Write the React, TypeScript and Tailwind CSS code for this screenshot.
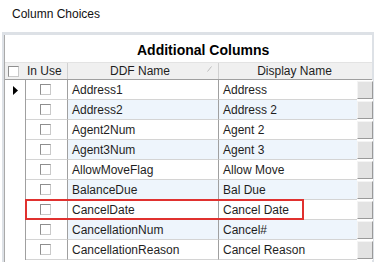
import React from 'react'

interface Row {
  ddf: string
  display: string
}

const rows: Row[] = [
  { ddf: 'Address1', display: 'Address' },
  { ddf: 'Address2', display: 'Address 2' },
  { ddf: 'Agent2Num', display: 'Agent 2' },
  { ddf: 'Agent3Num', display: 'Agent 3' },
  { ddf: 'AllowMoveFlag', display: 'Allow Move' },
  { ddf: 'BalanceDue', display: 'Bal Due' },
  { ddf: 'CancelDate', display: 'Cancel Date' },
  { ddf: 'CancellationNum', display: 'Cancel#' },
  { ddf: 'CancellationReason', display: 'Cancel Reason' },
]

function CheckBox() {
  return (
    <span className="block h-[11px] w-[11px] border-t border-l border-t-[#8e8e8e] border-l-[#8e8e8e] border-r border-b border-r-[#c9c9c9] border-b-[#c9c9c9] bg-white" />
  )
}

function GridRow({ row, index }: { row: Row; index: number }) {
  const alt = index % 2 === 1
  const highlighted = row.ddf === 'CancelDate'
  return (
    <div className="relative flex h-[20px]">
      {/* Row header */}
      <div className="flex w-[21px] shrink-0 items-center justify-center border-r border-[#a0a0a0] bg-white pl-[1px]">
        {index === 0 && (
          <svg width="5" height="9" viewBox="0 0 5 9">
            <path d="M0 0L5 4.5L0 9Z" fill="#000" />
          </svg>
        )}
      </div>
      {/* In Use */}
      <div className="flex w-[42px] shrink-0 items-center justify-center border-r border-b border-r-[#a0a0a0] border-b-[#d4d4d4] bg-white pr-[2px]">
        <CheckBox />
      </div>
      {/* DDF Name */}
      <div
        className={`flex w-[151px] shrink-0 items-center border-r border-b border-r-[#a0a0a0] border-b-[#d4d4d4] pl-[4px] ${
          alt ? 'bg-[#eef5fc]' : 'bg-white'
        }`}
      >
        {row.ddf}
      </div>
      {/* Display Name */}
      <div
        className={`flex w-[138px] shrink-0 items-center border-b border-b-[#d4d4d4] pl-[4px] ${
          alt ? 'bg-[#eef5fc]' : 'bg-white'
        }`}
      >
        {row.display}
      </div>
      {/* Button */}
      <div className="flex w-[16px] shrink-0 bg-white py-[1px]">
        <div className="h-full w-full border border-t-[#f4f4f4] border-l-[#f4f4f4] border-r-[#9a9a9a] border-b-[#9a9a9a] bg-[#e3e3e3]" />
      </div>

      {highlighted && (
        <div className="pointer-events-none absolute top-[-1px] left-[20px] h-[21px] w-[279px] border-2 border-[#e0312f]" />
      )}
    </div>
  )
}

export default function App() {
  return (
    <div
      className="h-[262px] w-[375px] overflow-hidden bg-white text-[12px] text-[#1e1e1e]"
      style={{ fontFamily: '"Liberation Sans", Arial, sans-serif' }}
    >
      {/* Title */}
      <div className="flex h-[32px] items-start pl-[12px] pt-[7px] leading-[15px] text-[#111]">
        Column Choices
      </div>

      {/* Grid */}
      <div className="ml-[2px] w-[372px] border-t-[3px] border-l-2 border-r-2 border-[#dde1e6] bg-white">
        <div className="border-l border-[#a9a9a9]">
          {/* Caption */}
          <div className="flex h-[27px] items-center pl-[132px] pt-[3px] text-[14px] font-bold text-[#000]">
            Additional Columns
          </div>

          {/* Column headers */}
          <div className="flex h-[18px] border-t border-b border-t-[#e3e3e3] border-b-[#a0a0a0] bg-[#f0f0f0] leading-[16px]">
            <div className="flex w-[63px] shrink-0 items-center border-r border-[#d0d0d0] pl-[3px]">
              <CheckBox />
              <span className="ml-[8px]">In Use</span>
            </div>
            <div className="relative flex w-[151px] shrink-0 items-center justify-center border-r border-[#d0d0d0]">
              <span className="pr-[6px]">DDF Name</span>
              <svg className="absolute top-[3px] right-[6px]" width="5" height="6" viewBox="0 0 5 6">
                <path d="M0.5 5.5L4.5 0.5" stroke="#bdbdbd" strokeWidth="1" />
              </svg>
            </div>
            <div className="flex flex-1 items-center justify-center pr-[2px]">Display Name</div>
          </div>

          {rows.map((row, i) => (
            <GridRow key={row.ddf} row={row} index={i} />
          ))}
          <div className="h-[4px] border-l-[21px] border-white bg-white" />
        </div>
      </div>
    </div>
  )
}
